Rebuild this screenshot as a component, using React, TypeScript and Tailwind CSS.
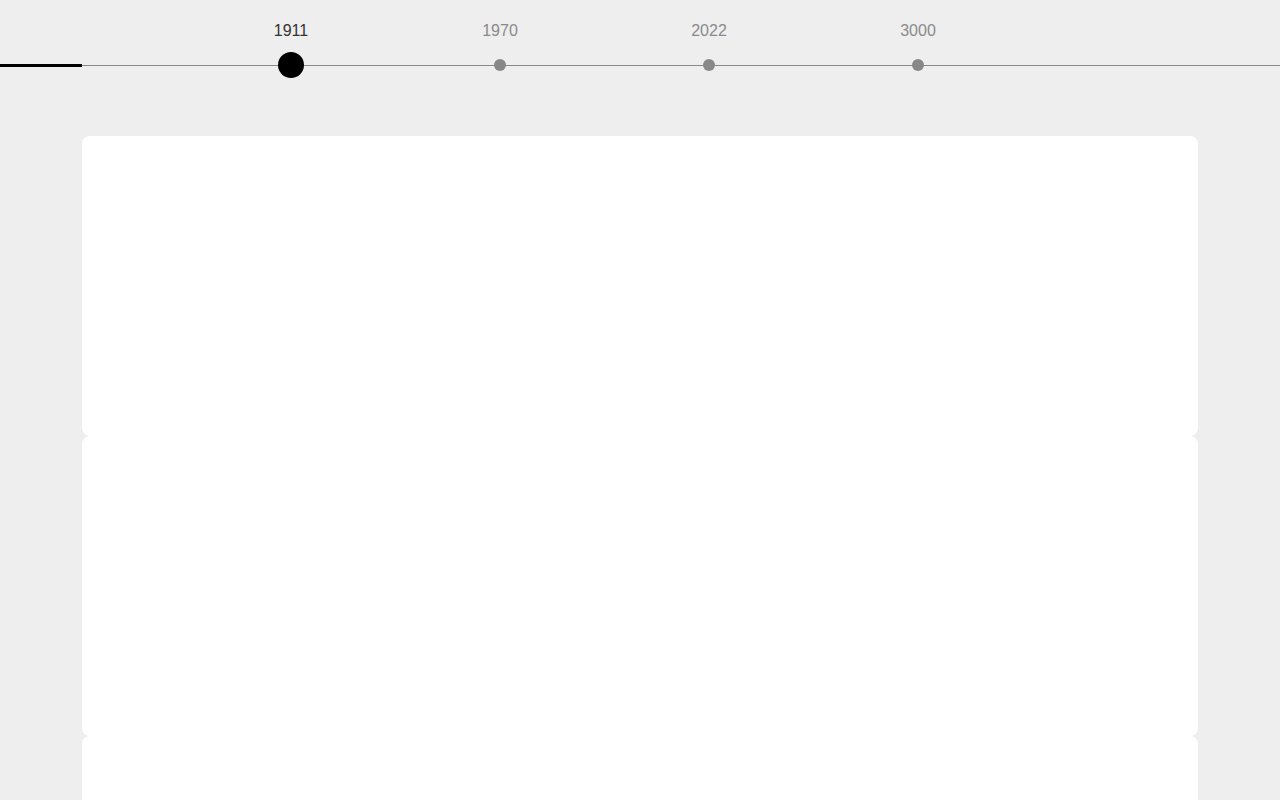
import React from "react";

const years = ["1911", "1970", "2022", "3000"];

const TimelineItem = ({ year, active }: { year: string; active: boolean }) => {
  return (
    <div className="w-[209px] shrink-0 flex flex-col items-center">
      <p
        className={`h-[20px] leading-[20px] text-[16px] pt-px ${
          active ? "text-[#333333]" : "text-[#8a8a8a]"
        }`}
      >
        {year}
      </p>
      <div className="h-[50px] flex items-center justify-center">
        {active ? (
          <div className="w-[26px] h-[26px] rounded-full bg-black" />
        ) : (
          <div className="w-[12px] h-[12px] rounded-full bg-[#888888]" />
        )}
      </div>
    </div>
  );
};

export default function App() {
  return (
    <div
      className="h-[800px] overflow-hidden bg-[#eeeeee]"
      style={{ fontFamily: '"Liberation Sans", Arial, sans-serif' }}
    >
      <div className="relative h-[136px]">
        <div className="absolute left-0 right-0 top-[64.5px] h-px bg-[#888888]" />
        <div className="absolute left-0 top-[63.5px] w-[82px] h-[3px] bg-black" />
        <div className="relative flex pt-[20px] ml-[186.5px]">
          {years.map((y, i) => (
            <TimelineItem key={y} year={y} active={i === 0} />
          ))}
        </div>
      </div>

      <div className="mx-[82px] flex flex-col">
        <div className="h-[300px] bg-white rounded-lg" />
        <div className="h-[300px] bg-white rounded-lg" />
        <div className="h-[300px] bg-white rounded-lg" />
      </div>
    </div>
  );
}
